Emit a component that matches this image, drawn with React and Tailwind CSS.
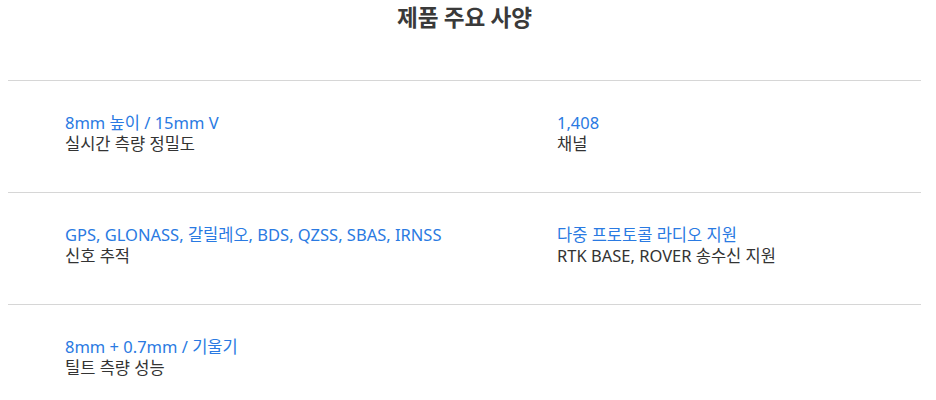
export default function App() {
  const rows = [
    [
      ["8mm 높이 / 15mm V", "실시간 측량 정밀도"],
      ["1,408", "채널"],
    ],
    [
      ["GPS, GLONASS, 갈릴레오, BDS, QZSS, SBAS, IRNSS", "신호 추적"],
      ["다중 프로토콜 라디오 지원", "RTK BASE, ROVER 송수신 지원"],
    ],
    [["8mm + 0.7mm / 기울기", "틸트 측량 성능"], null],
  ];
  return (
    <div
      className="w-[936px] h-[400px] bg-white overflow-hidden"
      style={{ fontFamily: '"Noto Sans", "Noto Sans CJK KR", sans-serif' }}
    >
      <div className="ml-[8px] w-[913px]">
        <h1
          className="text-center text-[22.6px] font-bold text-[#3a3a3a] leading-[34px]"
          style={{ fontFamily: '"Noto Sans CJK KR", sans-serif' }}
        >
          제품 주요 사양
        </h1>
        <div className="mt-[46px]">
          {rows.map((row, i) => (
            <div
              key={i}
              className="border-t border-[#d6d6d6] grid grid-cols-[492px_1fr] pl-[57px] pt-[31px] pb-[38px]"
            >
              {row.map((cell, j) => (
                <div key={j} className="text-[16.5px] leading-[21px]">
                  {cell && (
                    <>
                      <div className="text-[#2a7ae2]">{cell[0]}</div>
                      <div className="text-[#333]">{cell[1]}</div>
                    </>
                  )}
                </div>
              ))}
            </div>
          ))}
        </div>
      </div>
    </div>
  );
}
